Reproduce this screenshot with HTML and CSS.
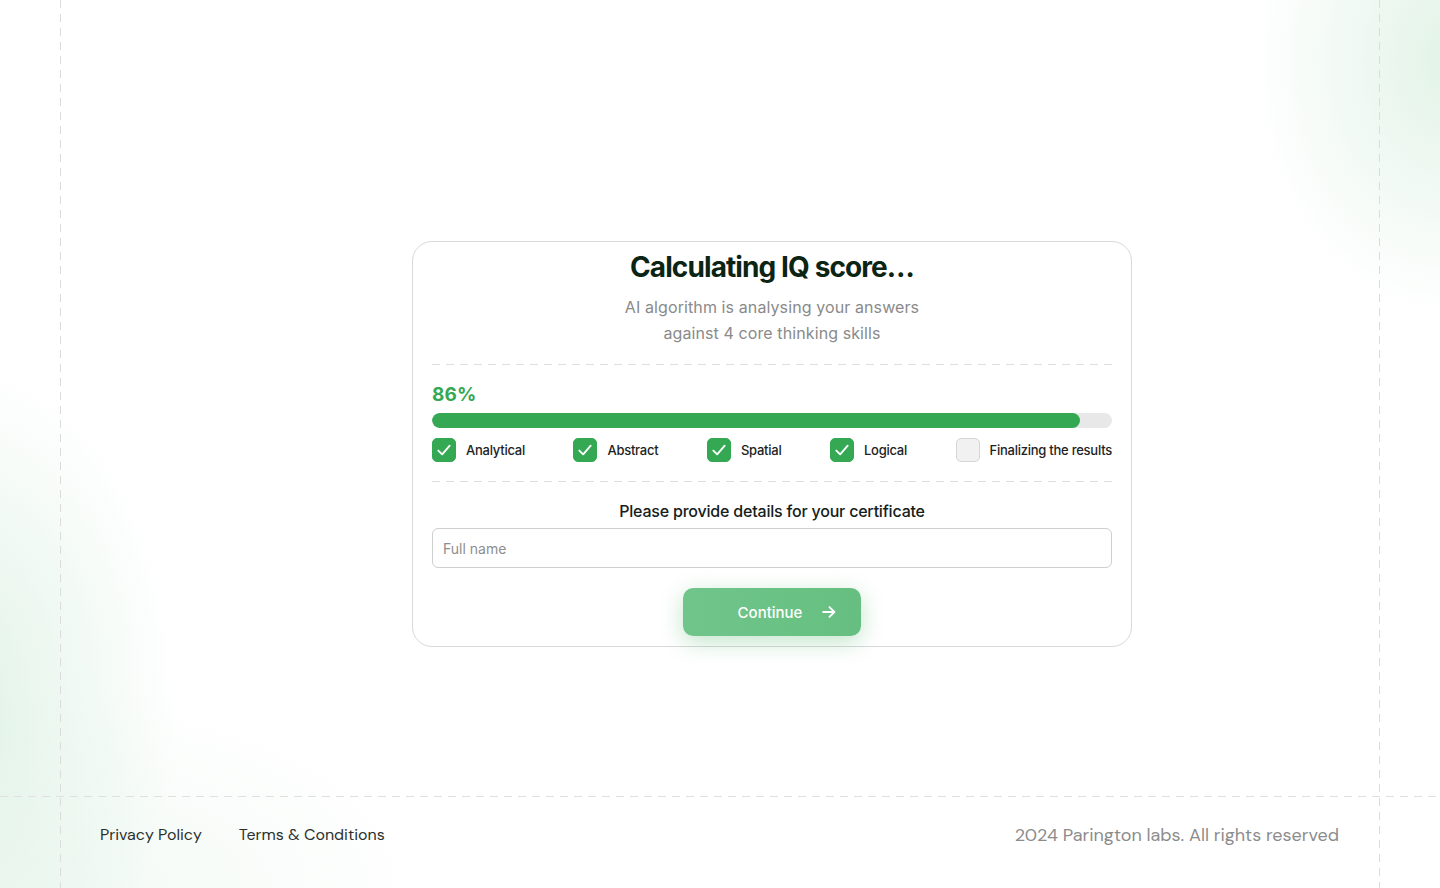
FILE: index.html
```html
<!DOCTYPE html>
<html lang="en">
<head>
<meta charset="utf-8">
<title>Calculating IQ score</title>
<link rel="stylesheet" href="styles.css">
</head>
<body>
<main class="main">
  <section class="card">
    <h1 class="title">Calculating IQ score…</h1>
    <p class="subtitle">AI algorithm is analysing your answers<br>against 4 core thinking skills</p>
    <hr class="divider">
    <div class="progress-block">
      <div class="percent">86%</div>
      <div class="bar"><div class="bar-fill" style="width:95.3%"></div></div>
      <ul class="checks">
        <li class="check-item"><span class="box done"><svg viewBox="0 0 24 24" width="24" height="24"><path d="M5.8 12.6l4.2 4.2 8.2-9.6" fill="none" stroke="#fff" stroke-width="2" stroke-linecap="round" stroke-linejoin="round"/></svg></span>Analytical</li>
        <li class="check-item"><span class="box done"><svg viewBox="0 0 24 24" width="24" height="24"><path d="M5.8 12.6l4.2 4.2 8.2-9.6" fill="none" stroke="#fff" stroke-width="2" stroke-linecap="round" stroke-linejoin="round"/></svg></span>Abstract</li>
        <li class="check-item"><span class="box done"><svg viewBox="0 0 24 24" width="24" height="24"><path d="M5.8 12.6l4.2 4.2 8.2-9.6" fill="none" stroke="#fff" stroke-width="2" stroke-linecap="round" stroke-linejoin="round"/></svg></span>Spatial</li>
        <li class="check-item"><span class="box done"><svg viewBox="0 0 24 24" width="24" height="24"><path d="M5.8 12.6l4.2 4.2 8.2-9.6" fill="none" stroke="#fff" stroke-width="2" stroke-linecap="round" stroke-linejoin="round"/></svg></span>Logical</li>
        <li class="check-item"><span class="box"></span>Finalizing the results</li>
      </ul>
    </div>
    <hr class="divider">
    <p class="form-label">Please provide details for your certificate</p>
    <input class="name-input" type="text" placeholder="Full name">
    <button class="continue" type="button">Continue
      <svg viewBox="0 0 20 20" width="18" height="18"><path d="M3.5 10h12M10.5 4.5l5.5 5.5-5.5 5.5" fill="none" stroke="#fff" stroke-width="2" stroke-linecap="round" stroke-linejoin="round"/></svg>
    </button>
  </section>
</main>
<footer class="footer">
  <nav class="footer-links">
    <a href="#">Privacy Policy</a>
    <a href="#">Terms &amp; Conditions</a>
  </nav>
  <p class="copyright">2024 Parington labs. All rights reserved</p>
</footer>
</body>
</html>
```

FILE: styles.css
```css
* { box-sizing: border-box; }

html, body { margin: 0; padding: 0; }

body {
  width: 1440px;
  height: 888px;
  overflow: hidden;
  font-family: Inter, "Liberation Sans", sans-serif;
  color: #1a1f1b;
  background-color: #ffffff;
  background-image:
    repeating-linear-gradient(to bottom, #dcdcdc 0 8px, transparent 8px 14px),
    repeating-linear-gradient(to bottom, #dcdcdc 0 8px, transparent 8px 14px),
    radial-gradient(ellipse 200px 260px at 1450px 60px, rgba(214, 238, 221, 0.7), rgba(214, 238, 221, 0) 100%),
    radial-gradient(ellipse 220px 340px at -40px 700px, rgba(214, 238, 222, 0.75), rgba(214, 238, 222, 0) 100%),
    radial-gradient(ellipse 380px 200px at 60px 888px, rgba(230, 244, 234, 0.5), rgba(230, 244, 234, 0) 100%);
  background-repeat: no-repeat;
  background-size: 1px 100%, 1px 100%, 100% 100%, 100% 100%, 100% 100%;
  background-position: 60px 0, 1379px 0, 0 0, 0 0, 0 0;
}

.main {
  height: 796px;
  display: flex;
  justify-content: flex-start;
  padding-top: 241px;
  padding-left: 412px;
}

.card {
  width: 720px;
  height: 406px;
  background: #ffffff;
  border: 1px solid #d9d9d9;
  border-radius: 20px;
  padding: 8px 19px 0;
  display: flex;
  flex-direction: column;
  align-items: stretch;
  text-align: center;
}

.title {
  margin: 0;
  font-size: 28px;
  line-height: 34px;
  font-weight: 700;
  letter-spacing: -0.9px;
  color: #0c2413;
}

.subtitle {
  margin: 10px 0 0;
  font-size: 16px;
  line-height: 26px;
  color: #8a8a8a;
  letter-spacing: 0.1px;
}

.divider {
  margin: 0;
  border: 0;
  height: 1px;
  background-image: repeating-linear-gradient(to right, #dedede 0 8px, transparent 8px 14px);
}

.subtitle + .divider { margin-top: 18px; }

.progress-block {
  padding-top: 18px;
  padding-bottom: 19px;
  text-align: left;
}

.percent {
  font-size: 19px;
  line-height: 24px;
  font-weight: 700;
  color: #34a853;
  letter-spacing: 0.2px;
}

.bar {
  margin-top: 6px;
  height: 15px;
  border-radius: 8px;
  background: #e8e8e8;
  overflow: hidden;
}

.bar-fill {
  height: 100%;
  border-radius: 8px;
  background: #34a853;
}

.checks {
  list-style: none;
  margin: 10px 0 0;
  padding: 0;
  display: flex;
  justify-content: space-between;
}

.check-item {
  display: flex;
  align-items: center;
  gap: 10px;
  font-size: 13px;
  line-height: 24px;
  font-weight: 500;
  color: #1d231e;
  letter-spacing: -0.25px;
}

.box {
  width: 24px;
  height: 24px;
  border-radius: 5px;
  background: #f1f1f1;
  border: 1px solid #d6d6d6;
  display: flex;
  align-items: center;
  justify-content: center;
}

.box.done {
  background: #34a853;
  border-color: #34a853;
}

.form-label {
  margin: 18px 0 0;
  font-size: 16px;
  line-height: 22px;
  font-weight: 500;
  color: #15201a;
  letter-spacing: -0.2px;
}

.name-input {
  margin-top: 6px;
  height: 40px;
  width: 100%;
  border: 1px solid #cfcfcf;
  border-radius: 6px;
  padding: 0 10px;
  font-family: Inter, "Liberation Sans", sans-serif;
  font-size: 14px;
  color: #333;
  background: #fff;
}

.name-input::placeholder { color: #8e8e8e; }

.continue {
  align-self: center;
  margin-top: 20px;
  width: 178px;
  height: 48px;
  border: 0;
  border-radius: 10px;
  background: linear-gradient(90deg, #70c58b, #66bf80);
  box-shadow: 0 6px 22px rgba(52, 168, 83, 0.3);
  color: #ffffff;
  font-family: Inter, "Liberation Sans", sans-serif;
  font-size: 15px;
  font-weight: 500;
  display: flex;
  align-items: center;
  justify-content: center;
  gap: 18px;
  padding-left: 44px;
  padding-right: 12px;
}

.footer {
  height: 92px;
  background-image: repeating-linear-gradient(to right, #e0e0e0 0 8px, transparent 8px 14px);
  background-repeat: no-repeat;
  background-size: 100% 1px;
  background-position: 0 0;
  display: flex;
  justify-content: space-between;
  align-items: flex-start;
  padding: 28px 101px 0 100px;
  font-family: "DM Sans", Lato, Inter, sans-serif;
  font-size: 16px;
  line-height: 22px;
}

.footer-links {
  display: flex;
  gap: 37px;
}

.footer-links a {
  color: #2b302c;
  text-decoration: none;
}

.copyright {
  margin: 0;
  color: #8c8c8c;
  font-size: 18px;
}
```
